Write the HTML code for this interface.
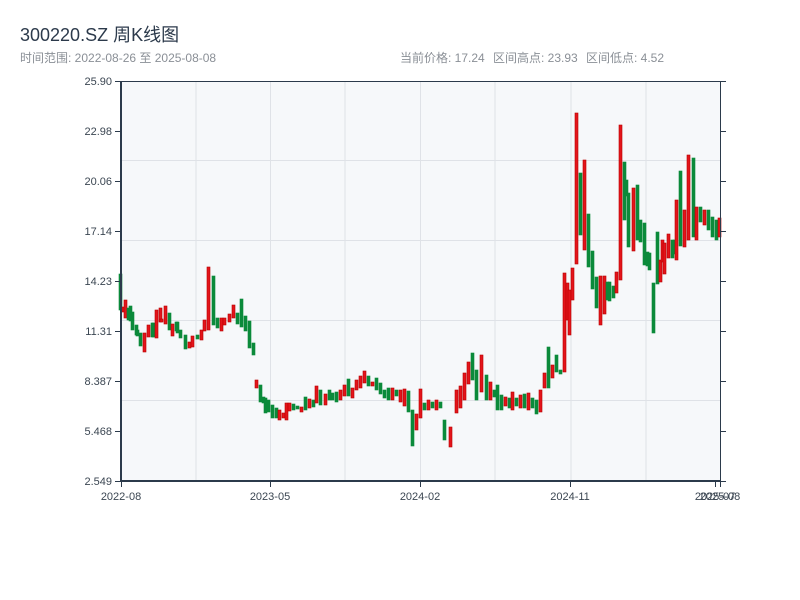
<!DOCTYPE html>
<html><head><meta charset="utf-8"><style>
body{margin:0;background:#fff;width:800px;height:600px;overflow:hidden;font-family:"Liberation Sans","Noto Sans CJK SC",sans-serif}
</style></head><body>
<svg width="800" height="600" xmlns="http://www.w3.org/2000/svg" style="position:absolute;left:0;top:0">
<text x="20" y="41" font-size="18" fill="#2c3a4b" font-family="Liberation Sans, Noto Sans CJK SC, sans-serif">300220.SZ 周K线图</text>
<text x="20" y="62" font-size="12" fill="#8a8f96" font-family="Liberation Sans, Noto Sans CJK SC, sans-serif">时间范围: 2022-08-26 至 2025-08-08</text>
<g font-size="12" fill="#8a8f96" font-family="Liberation Sans, Noto Sans CJK SC, sans-serif">
<text x="400" y="62">当前价格: 17.24</text>
<text x="493" y="62">区间高点: 23.93</text>
<text x="586" y="62">区间低点: 4.52</text>
</g>
<rect x="121" y="81" width="599" height="400" fill="#f6f8fa"/>
<g stroke="#dfe2e7" stroke-width="1">
<line x1="196" y1="81" x2="196" y2="481"/><line x1="270.5" y1="81" x2="270.5" y2="481"/><line x1="345" y1="81" x2="345" y2="481"/><line x1="420.5" y1="81" x2="420.5" y2="481"/><line x1="495" y1="81" x2="495" y2="481"/><line x1="571" y1="81" x2="571" y2="481"/><line x1="646" y1="81" x2="646" y2="481"/>
<line x1="121" y1="160.5" x2="720" y2="160.5"/><line x1="121" y1="240.5" x2="720" y2="240.5"/><line x1="121" y1="320.5" x2="720" y2="320.5"/><line x1="121" y1="400.5" x2="720" y2="400.5"/>
</g>
<g id="c"></g>
<g stroke="#2b3a4b" stroke-width="2" fill="none">
<line x1="121" y1="81" x2="121" y2="482"/><line x1="120" y1="481" x2="721" y2="481"/>
</g>
<g stroke="#2b3a4b" stroke-width="1" fill="none">
<line x1="121" y1="81.5" x2="720" y2="81.5"/><line x1="720.5" y1="81" x2="720.5" y2="481"/>
<path d="M115 81.5H121M115 131.5H121M115 181.5H121M115 231.5H121M115 281.5H121M115 331.5H121M115 381.5H121M115 431.5H121M115 481.5H121"/>
<path d="M720 81.5H726M720 131.5H726M720 181.5H726M720 231.5H726M720 281.5H726M720 331.5H726M720 381.5H726M720 431.5H726M720 481.5H726"/>
<path d="M121.5 481V487M270.5 481V487M420.5 481V487M570.5 481V487M715.5 481V487M720.5 481V487"/>
</g>
<g font-size="11" fill="#3b4652" text-anchor="end" font-family="Liberation Sans, sans-serif">
<text x="112" y="85">25.90</text><text x="112" y="135">22.98</text><text x="112" y="185">20.06</text><text x="112" y="235">17.14</text><text x="112" y="285">14.23</text><text x="112" y="335">11.31</text><text x="112" y="385">8.387</text><text x="112" y="435">5.468</text><text x="112" y="485">2.549</text>
</g>
<g font-size="11" fill="#3b4652" text-anchor="middle" font-family="Liberation Sans, sans-serif">
<text x="121" y="500">2022-08</text><text x="270" y="500">2023-05</text><text x="420" y="500">2024-02</text><text x="570" y="500">2024-11</text><text x="715" y="500">2025-07</text><text x="720" y="500">2025-08</text>
</g>
</svg>
<script>
var d=[[120,274,310,'g'],[123,307,312,'r'],[125,300,318,'r'],[128,308,320,'g'],[130,306,321,'g'],[132,312,330,'g'],[136,325,335,'g'],[137,330,336,'g'],[140,333,346,'g'],[144,333,352,'r'],[148,325,337,'r'],[152,323,337,'g'],[153,323,337,'g'],[156,310,338,'r'],[160,308,322,'r'],[161,319,322,'r'],[165,306,324,'r'],[169,313,330,'g'],[172,324,336,'r'],[176,322,331,'g'],[177,322,333,'g'],[180,330,338,'g'],[185,335,349,'g'],[189,342,348,'r'],[192,336,347,'r'],[197,335,339,'g'],[201,330,340,'r'],[204,320,331,'r'],[208,267,330,'r'],[213,276,325,'g'],[217,318,328,'g'],[221,318,331,'r'],[224,318,325,'r'],[229,314,322,'r'],[233,305,318,'r'],[237,313,324,'g'],[241,299,327,'g'],[245,316,331,'g'],[249,321,348,'g'],[253,343,355,'g'],
[256,380,388,'r'],[260,385,402,'g'],[263,397,403,'g'],[265,398,413,'g'],[268,400,412,'g'],[272,405,418,'g'],[276,408,418,'g'],[279,410,420,'r'],[283,413,418,'r'],[286,403,420,'r'],[289,403,411,'r'],[293,404,410,'g'],[297,406,409,'g'],[301,407,412,'r'],[305,397,410,'g'],[309,399,408,'r'],[313,400,407,'g'],[316,386,403,'r'],
[320,390,405,'g'],[325,394,405,'r'],[329,390,400,'g'],[332,393,400,'g'],[336,392,402,'g'],[340,390,400,'r'],[344,385,396,'r'],[348,379,396,'g'],[352,388,398,'r'],[356,380,390,'r'],[360,376,388,'r'],[364,371,383,'r'],[368,376,386,'g'],[372,382,386,'r'],[376,378,390,'g'],[380,383,394,'g'],[384,390,398,'g'],[388,388,400,'g'],[392,388,400,'r'],[396,390,396,'g'],[400,390,402,'r'],[404,389,406,'r'],[408,391,412,'g'],[412,410,446,'g'],[416,414,430,'r'],[420,389,418,'r'],[424,403,410,'g'],[428,400,410,'r'],[432,402,408,'g'],[436,400,410,'r'],[440,402,408,'g'],[444,420,440,'g'],[450,427,447,'r'],[456,390,413,'r'],[460,386,408,'r'],[464,373,400,'r'],[468,362,384,'r'],[472,353,380,'g'],[476,370,400,'g'],[481,355,392,'r'],[486,375,400,'g'],[490,382,400,'r'],[494,390,397,'g'],[497,385,410,'g'],[501,395,410,'g'],[505,397,406,'r'],[509,398,408,'g'],[512,392,410,'r'],[516,398,406,'g'],[520,395,408,'r'],[524,394,408,'g'],[528,393,410,'r'],[532,398,408,'g'],[536,400,414,'g'],[540,390,412,'r'],[544,373,388,'r'],[548,347,388,'g'],[552,365,378,'r'],[556,355,372,'g'],[560,370,374,'g'],[564,273,372,'r'],[567,283,320,'r'],[569,290,335,'r'],[572,268,300,'r'],[576,113,264,'r'],[580,173,235,'g'],[584,160,250,'r'],[588,214,267,'g'],[592,251,289,'g'],[596,277,308,'g'],[600,276,325,'r'],[604,276,314,'r'],[607,282,300,'g'],[609,282,301,'g'],[613,286,298,'g'],[616,272,293,'r'],[620,125,280,'r'],[624,162,220,'g'],[626,180,196,'g'],[628,193,247,'g'],[633,188,251,'r'],[637,185,240,'g'],[640,220,242,'g'],[644,223,265,'g'],[647,252,266,'g'],[649,253,270,'g'],[653,283,333,'g'],[657,232,284,'g'],[660,260,282,'r'],[662,240,262,'r'],[664,243,274,'r'],[668,234,258,'r'],[672,240,258,'g'],[674,240,254,'g'],[676,200,260,'r'],[680,171,246,'g'],[684,210,247,'r'],[688,155,240,'r'],[693,158,237,'g'],[696,207,240,'r'],[700,207,222,'g'],[704,210,225,'r'],[708,210,230,'g'],[712,217,237,'g'],[716,220,240,'g'],[719,218,237,'r']];
var s='';d.forEach(function(a){var f=a[3]=='r'?'#e3141b':'#0b8a3a',k=a[3]=='r'?'#b80000':'#0b8a3a';s+='<rect x="'+(a[0]-1)+'" y="'+a[1]+'" width="3" height="'+(a[2]-a[1])+'" fill="'+f+'" stroke="'+k+'" stroke-width="0.6"/>';});
document.getElementById('c').innerHTML=s;
</script>
</body></html>
